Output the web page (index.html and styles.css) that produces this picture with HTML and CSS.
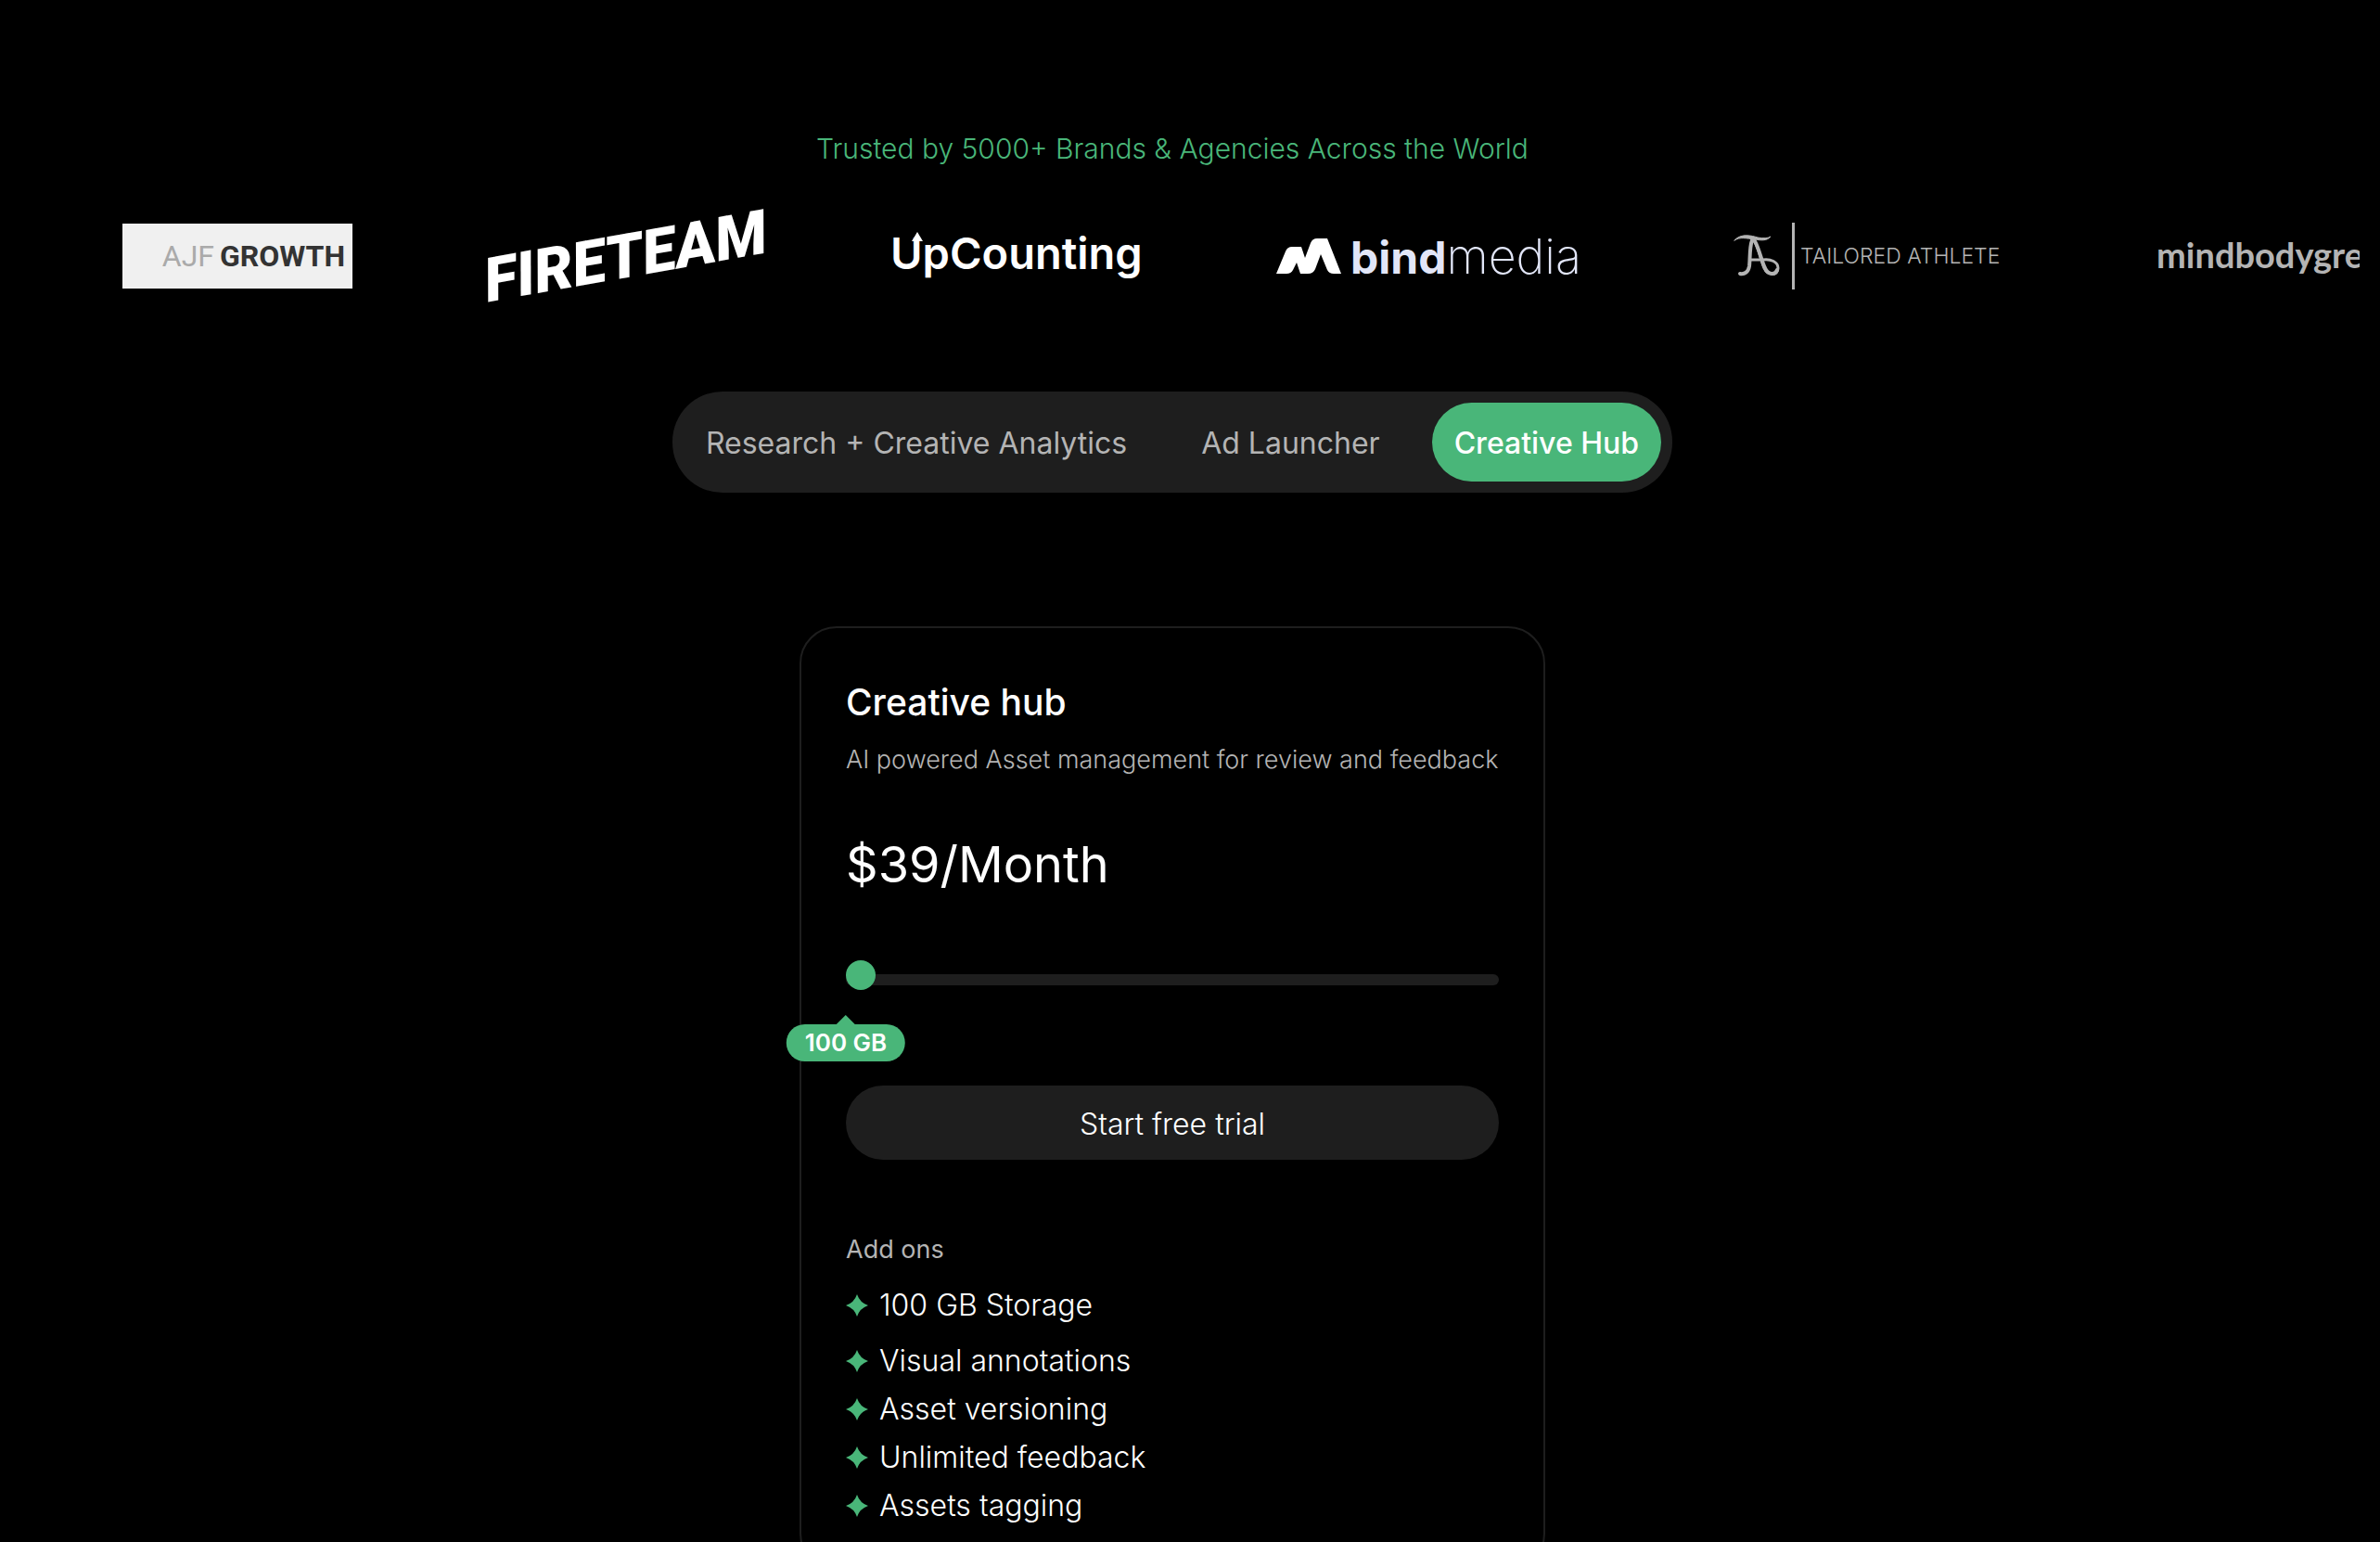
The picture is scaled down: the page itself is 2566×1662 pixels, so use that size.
FILE: index.html
```html
<!DOCTYPE html>
<html lang="en">
<head>
  <meta charset="UTF-8">
  <meta name="viewport" content="width=device-width, initial-scale=1.0">
  <title>Pricing</title>
  <link rel="stylesheet" href="styles.css">
</head>
<body>
  <section class="trusted">
    <p class="trusted-title">Trusted by 5000+ Brands &amp; Agencies Across the World</p>
    <div class="logos">
      <div class="logo logo-ajf"><span class="ajf-light">AJF</span><span>GROWTH</span></div>
      <div class="logo logo-fireteam"><span>FIRETEAM</span></div>
      <div class="logo logo-upcounting">
        UpCounting
        <svg class="up-arrow" viewBox="0 0 12 12" width="12" height="12"><path d="M6 0 L12 10 L0 10 Z" fill="#fff"/></svg>
      </div>
      <div class="logo logo-bind">
        <svg viewBox="0 0 70 38" width="70" height="38">
          <path d="M0 38 L10 14 Q12 9 17 9 L27 9 L31 21 L37 5 Q39 0 44 0 L55 0 L70 38 L62 38 Q57 38 55 34 L48 17 L42 33 Q40 38 34 38 L26 38 L22 26 L18 34 Q16 38 11 38 Z" fill="#fff"/>
        </svg>
        <span class="bind-name"><b>bind</b>media</span>
      </div>
      <div class="logo logo-tailored">
        <svg viewBox="0 0 51 46" width="51" height="46" fill="none" stroke="#b4b4b4" stroke-linecap="round">
          <path d="M1 6 C8 -2 20 1 26 3 C32 4 37 4 40 2 C36 7 29 6 23 5 C14 4 7 2 1 6 Z" fill="#b4b4b4" stroke-width="1"/>
          <path d="M20 6 C17 14 18 26 17 34 C16 40 12 43 7 42" stroke-width="4"/>
          <path d="M22 6 C27 14 29 26 33 36 C37 45 48 44 48 36 C48 29 40 26 32 27 L18 27" stroke-width="3"/>
          <path d="M23 7 C28 16 30 28 34 36 C37 43 45 44 47 38" stroke-width="4"/>
        </svg>
        <span class="tailored-name">TAILORED ATHLETE</span>
      </div>
      <div class="logo logo-mbg">mindbodygreen</div>
    </div>
  </section>

  <nav class="tabs">
    <button class="tab" type="button">Research + Creative Analytics</button>
    <button class="tab" type="button">Ad Launcher</button>
    <button class="tab active" type="button">Creative Hub</button>
  </nav>

  <main class="card">
    <h2>Creative hub</h2>
    <p class="card-desc">AI powered Asset management for review and feedback</p>
    <div class="price">$39/Month</div>

    <div class="storage">
      <input type="range" id="storage" min="0" max="10" value="0" aria-label="Storage">
      <output class="storage-tip" for="storage">100 GB</output>
    </div>

    <button class="trial" type="button">Start free trial</button>

    <h3>Add ons</h3>
    <ul class="addons">
      <li><svg class="star" viewBox="0 0 24 24"><path d="M12 0 Q15 9 24 12 Q15 15 12 24 Q9 15 0 12 Q9 9 12 0Z"/></svg>100 GB Storage</li>
      <li><svg class="star" viewBox="0 0 24 24"><path d="M12 0 Q15 9 24 12 Q15 15 12 24 Q9 15 0 12 Q9 9 12 0Z"/></svg>Visual annotations</li>
      <li><svg class="star" viewBox="0 0 24 24"><path d="M12 0 Q15 9 24 12 Q15 15 12 24 Q9 15 0 12 Q9 9 12 0Z"/></svg>Asset versioning</li>
      <li><svg class="star" viewBox="0 0 24 24"><path d="M12 0 Q15 9 24 12 Q15 15 12 24 Q9 15 0 12 Q9 9 12 0Z"/></svg>Unlimited feedback</li>
      <li><svg class="star" viewBox="0 0 24 24"><path d="M12 0 Q15 9 24 12 Q15 15 12 24 Q9 15 0 12 Q9 9 12 0Z"/></svg>Assets tagging</li>
    </ul>
  </main>
</body>
</html>
```
FILE: styles.css
```css
* {
  box-sizing: border-box;
}

body {
  margin: 0;
  padding: 136px 38px 64px 0;
  background: #000;
  color: #fff;
  font-family: Inter, sans-serif;
  font-size: 32px;
  font-weight: 300;
  display: flex;
  flex-direction: column;
  align-items: center;
}

button {
  font: inherit;
  border: none;
  cursor: pointer;
}

.trusted {
  width: 100%;
}

.trusted-title {
  margin: 0;
  font-size: 30px;
  line-height: 48px;
  text-align: center;
  color: #49b679;
}

.logos {
  display: flex;
  align-items: center;
  gap: 136px;
  height: 92px;
  margin: 46px -16px 0;
  padding-left: 148px;
  overflow-x: clip;
}

.logo {
  flex: none;
  display: flex;
  align-items: center;
  white-space: nowrap;
}

.logo-ajf {
  width: 248px;
  height: 70px;
  padding-right: 8px;
  justify-content: flex-end;
  gap: 6px;
  background: #f0f0f0;
  color: #333;
  font-family: Roboto, sans-serif;
  font-size: 32px;
  font-weight: 700;
}

.ajf-light {
  color: #aaa;
  font-weight: 400;
}

.logo-fireteam {
  width: 308px;
  padding-left: 8px;
  justify-content: center;
  font-family: Roboto, sans-serif;
  font-size: 66px;
  font-weight: 900;
  font-style: italic;
}

.logo-fireteam span {
  transform: rotate(-10deg);
}

.logo-upcounting {
  position: relative;
  width: 280px;
  padding-bottom: 8px;
  font-size: 47px;
  font-weight: 600;
}

.up-arrow {
  position: absolute;
  top: 6px;
  left: 23px;
}

.logo-bind {
  width: 357px;
  gap: 10px;
  color: #e2e6f8;
  font-size: 52px;
  font-weight: 200;
}

.logo-bind b {
  font-size: 48px;
  font-weight: 700;
}

.logo-tailored {
  width: 320px;
  gap: 12px;
  color: #b4b4b4;
  font-size: 23px;
}

.tailored-name {
  line-height: 72px;
  padding-left: 6px;
  border-left: 3px solid #b4b4b4;
}

.logo-mbg {
  padding-bottom: 4px;
  color: #b4b4b4;
  font-family: Lato, sans-serif;
  font-size: 38px;
  font-weight: 700;
}

.tabs {
  display: flex;
  gap: 32px;
  margin-top: 100px;
  padding: 12px;
  border-radius: 54px;
  background: #1e1e1e;
}

.tab {
  height: 85px;
  padding: 2px 24px 0;
  border-radius: 43px;
  background: none;
  color: #b4b4b4;
  font-weight: 400;
}

.tab.active {
  background: #49b679;
  color: #fff;
  font-weight: 500;
}

.card {
  width: 100%;
  max-width: 804px;
  margin-top: 144px;
  padding: 50px 48px 48px;
  border: 2px solid #1e1e1e;
  border-radius: 40px;
}

.card h2 {
  margin: 0;
  font-size: 39px;
  font-weight: 500;
  line-height: 60px;
}

.card-desc {
  margin: 12px 0 0;
  color: #b4b4b4;
  font-size: 27px;
  line-height: 40px;
}

.price {
  margin-top: 57px;
  font-size: 54px;
  font-weight: 400;
  line-height: 72px;
}

.storage {
  position: relative;
  height: 12px;
  margin: 82px 0 108px;
}

.storage input {
  display: block;
  width: 100%;
  height: 12px;
  margin: 0;
  border-radius: 6px;
  background: #1e1e1e;
  appearance: none;
  -webkit-appearance: none;
}

.storage input::-webkit-slider-runnable-track {
  height: 12px;
}

.storage input::-webkit-slider-thumb {
  -webkit-appearance: none;
  width: 32px;
  height: 32px;
  margin-top: -15px;
  border-radius: 50%;
  background: #49b679;
}

.storage-tip {
  position: absolute;
  top: 54px;
  left: 0;
  transform: translateX(-50%);
  padding: 0 20px;
  border-radius: 20px;
  background: #49b679;
  font-size: 26px;
  font-weight: 600;
  line-height: 40px;
  white-space: nowrap;
}

.storage-tip::before {
  content: "";
  position: absolute;
  bottom: 100%;
  left: 50%;
  margin-left: -10px;
  border: 10px solid transparent;
  border-top: none;
  border-bottom-color: #49b679;
}

.trial {
  display: block;
  width: 100%;
  height: 80px;
  padding: 2px 0 0;
  border-radius: 40px;
  background: #1e1e1e;
  color: #fff;
}

.card h3 {
  margin: 77px 0 20px;
  color: #b4b4b4;
  font-size: 27px;
  font-weight: 400;
  line-height: 40px;
}

.addons {
  list-style: none;
  margin: 0;
  padding: 0;
}

.addons li {
  display: flex;
  align-items: center;
  gap: 12px;
  margin-top: 12px;
  line-height: 40px;
}

.addons li:first-child {
  margin-bottom: 20px;
}

.star {
  width: 24px;
  height: 24px;
  fill: #49b679;
}
```
